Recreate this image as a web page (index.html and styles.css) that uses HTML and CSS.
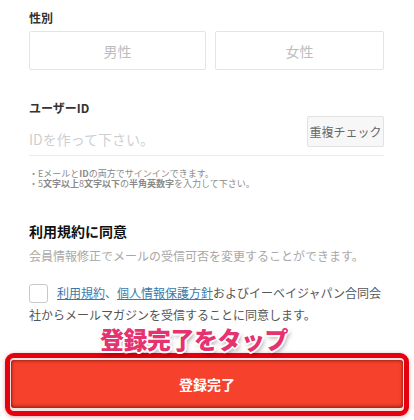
FILE: index.html
```html
<!DOCTYPE html>
<html lang="ja">
<head>
<meta charset="utf-8">
<title>会員登録</title>
<link rel="stylesheet" href="styles.css">
</head>
<body>
<div class="page">
  <section class="field">
    <div class="label label-gender">性別</div>
    <div class="gender-row">
      <div class="choice">男性</div>
      <div class="choice">女性</div>
    </div>
  </section>

  <section class="field">
    <div class="label label-id">ユーザーID</div>
    <div class="id-row">
      <span class="placeholder">IDを作って下さい。</span>
      <button class="check">重複チェック</button>
    </div>
    <ul class="notes">
      <li>・Eメールと<b>ID</b>の両方でサインインできます。</li>
      <li>・5<b>文字以上</b>8<b>文字以下</b>の<b>半角英数字</b>を入力して下さい。</li>
    </ul>
  </section>

  <section class="terms">
    <h2 class="terms-title">利用規約に同意</h2>
    <p class="terms-sub">会員情報修正でメールの受信可否を変更することができます。</p>
    <p class="agree"><span class="checkbox"></span><a class="link" href="#">利用規約</a><span class="link-plain">、</span><a class="link" href="#">個人情報保護方針</a>およびイーベイジャパン合同会社からメールマガジンを受信することに同意します。</p>
  </section>

  <div class="callout">登録完了をタップ</div>

  <div class="highlight">
    <button class="submit">登録完了</button>
  </div>
</div>
</body>
</html>
```

FILE: styles.css
```css
html, body {
  margin: 0;
  padding: 0;
  background: #ffffff;
}

body {
  font-family: "Noto Sans CJK JP", "Noto Sans", sans-serif;
  color: #333;
}

.page {
  width: 414px;
  height: 420px;
  box-sizing: border-box;
  padding: 0 30px 0 29px;
  overflow: hidden;
}

.label {
  font-size: 12px;
  line-height: 14px;
  font-weight: 700;
  color: #333;
}

.label-gender {
  padding-top: 11px;
}

.gender-row {
  margin-top: 6px;
  display: grid;
  grid-template-columns: 177fr 169fr;
  gap: 9px;
}

.choice {
  height: 39px;
  box-sizing: border-box;
  border: 1px solid #e4e4e4;
  border-radius: 2px;
  display: flex;
  align-items: center;
  justify-content: center;
  font-size: 14px;
  color: #bdbdbd;
}

.label-id {
  margin-top: 31px;
}

.id-row {
  margin-top: 1px;
  display: flex;
  justify-content: space-between;
  align-items: flex-start;
  padding-bottom: 8px;
  border-bottom: 1px solid #ececec;
}

.placeholder {
  margin-top: 16px;
  font-size: 14px;
  line-height: 14px;
  color: #cfcfcf;
}

.check {
  width: 77px;
  height: 31px;
  margin: 0;
  padding: 0;
  box-sizing: border-box;
  border: 1px solid #e2e2e2;
  border-radius: 2px;
  background: #f7f7f7;
  font-family: inherit;
  font-size: 12px;
  color: #666;
}

.notes {
  list-style: none;
  margin: 13px 0 0;
  padding: 0;
  font-size: 9px;
  line-height: 10px;
  color: #8a8a8a;
}

.notes b {
  font-weight: 700;
}

.terms-title {
  margin: 34px 0 0;
  font-size: 14px;
  line-height: 16px;
  font-weight: 700;
  color: #111;
}

.terms-sub {
  margin: 9px 0 0;
  font-size: 12px;
  line-height: 16px;
  color: #a8a8a8;
}

.agree {
  margin: 18px 0 0;
  font-size: 12px;
  line-height: 22px;
  color: #555;
}

.checkbox {
  display: inline-block;
  width: 19px;
  height: 19px;
  box-sizing: border-box;
  border: 1px solid #c9c9c9;
  border-radius: 3px;
  vertical-align: middle;
  margin: -3px 9px 0 0;
}

.link {
  color: #3a7aaa;
  text-decoration: underline;
}

.link-plain {
  color: #3a7aaa;
}

.callout {
  margin-left: 71px;
  font-size: 24px;
  line-height: 26px;
  font-weight: 900;
  color: #e5336f;
  letter-spacing: -0.5px;
  text-shadow:
    -2px 0 0 #fff, 2px 0 0 #fff, 0 -2px 0 #fff, 0 2px 0 #fff,
    -1px -1px 0 #fff, 1px 1px 0 #fff, -1px 1px 0 #fff, 1px -1px 0 #fff,
    2px 3px 4px rgba(0, 0, 0, 0.35);
}

.highlight {
  margin: 1px -25px 0 -24px;
  height: 63px;
  box-sizing: border-box;
  border: 5px solid #e4000f;
  border-radius: 9px;
  padding: 2px 1px 3px 1px;
  background: #f3e3e3;
  box-shadow: 0 1px 4px rgba(180, 0, 0, 0.35);
}

.submit {
  display: block;
  width: 100%;
  height: 100%;
  margin: 0;
  border: none;
  border-radius: 3px;
  background: #f6412d;
  box-shadow: inset 1px 1px 3px rgba(90, 10, 0, 0.55), inset -1px -2px 3px rgba(90, 10, 0, 0.45);
  font-family: inherit;
  font-size: 14px;
  font-weight: 700;
  color: #fff;
}
```
